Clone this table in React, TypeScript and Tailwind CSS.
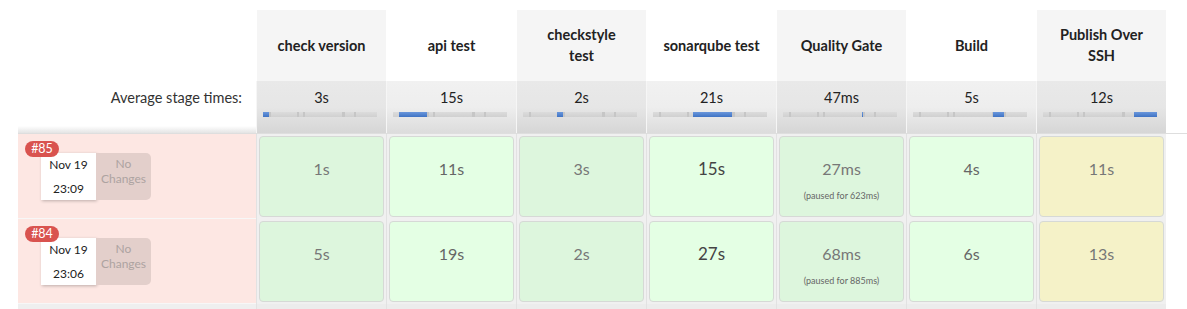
import React from "react";

type Stage = {
  name: React.ReactNode;
  avg: string;
  blue: [number, number];
  times: string[];
  paused?: string[];
  kind: "green" | "yellow";
  big?: boolean;
};

const stages: Stage[] = [
  { name: "check version", avg: "3s", blue: [0, 6], times: ["1s", "5s"], kind: "green" },
  { name: "api test", avg: "15s", blue: [6, 34], times: ["11s", "19s"], kind: "green" },
  { name: <>checkstyle<br />test</>, avg: "2s", blue: [34, 40], times: ["3s", "2s"], kind: "green" },
  { name: "sonarqube test", avg: "21s", blue: [40, 79], times: ["15s", "27s"], kind: "green", big: true },
  { name: "Quality Gate", avg: "47ms", blue: [79, 80], times: ["27ms", "68ms"], paused: ["623ms", "885ms"], kind: "green" },
  { name: "Build", avg: "5s", blue: [80, 91], times: ["4s", "6s"], kind: "green" },
  { name: <>Publish Over<br />SSH</>, avg: "12s", blue: [91, 114], times: ["11s", "13s"], kind: "yellow" },
];

const ticks = [6, 34, 40, 79, 80, 91];

const builds = [
  { num: "#85", date: "Nov 19", time: "23:09" },
  { num: "#84", date: "Nov 19", time: "23:06" },
];

function Bar({ blue }: { blue: [number, number] }) {
  const [a, b] = blue;
  return (
    <div className="relative ml-[6px] h-[5px] w-[114px] bg-gradient-to-b from-[#dcdcdc] to-[#d0d0d0]">
      {ticks.map((t) => (
        <div key={t} className="absolute top-0 h-full w-[2px] bg-[#c6c6c6]" style={{ left: t }} />
      ))}
      <div
        className="absolute top-0 h-full bg-gradient-to-b from-[#6a97dc] to-[#3f73c4]"
        style={{ left: a, width: Math.max(1, b - a) }}
      />
    </div>
  );
}

export default function App() {
  const font = { fontFamily: "Lato, 'Open Sans', sans-serif" };
  return (
    <div className="w-[1187px] h-[309px] overflow-hidden bg-white text-[#333]" style={font}>
      <div className="pt-[10px]">
        {/* Header row */}
        <div className="flex">
          <div className="w-[256px] shrink-0" />
          {stages.map((s, i) => (
            <div
              key={i}
              className={`flex h-[71px] w-[130px] shrink-0 items-center justify-center whitespace-nowrap text-center text-[14.5px] font-bold leading-[21px] text-[#222] border-l border-white ${
                i % 2 === 0 ? "bg-[#f5f5f5]" : "bg-white"
              }`}
            >
              <div className="-mt-[1px]">{s.name}</div>
            </div>
          ))}
        </div>

        {/* Average row */}
        <div className="flex">
          <div className="flex h-[52px] w-[256px] shrink-0 flex-col">
            <div className="pr-[14px] pt-[7px] text-right text-[14.5px] leading-[20px] text-[#333]">
              Average stage times:
            </div>
            <div className="flex-1" />
            <div className="ml-[18px] h-[7px] bg-gradient-to-b from-white to-[#e4e4e4]" />
          </div>
          {stages.map((s, i) => (
            <div
              key={i}
              className={`h-[52px] w-[130px] shrink-0 border-l border-[#f6f6f6] bg-gradient-to-b ${
                i % 2 === 0 ? "from-[#e9e9e9] via-[#e6e6e6] to-[#d6d6d6]" : "from-[#f1f1f1] via-[#eeeeee] to-[#dcdcdc]"
              }`}
            >
              <div className="pt-[7px] text-center text-[14.5px] leading-[20px] text-[#222]">{s.avg}</div>
              <div className="mt-[4px]">
                <Bar blue={s.blue} />
              </div>
            </div>
          ))}
        </div>

        {/* Build rows */}
        <div className="h-[1px] bg-[#dedede] ml-[18px]" />
        {builds.map((b, r) => (
          <div key={r} className="flex">
            <div className="w-[256px] shrink-0 pl-[18px]">
              <div className="relative h-[85px] border-b border-[#f7f7f7] bg-[#fde7e3]">
                <div className="absolute left-[7px] top-[7px] z-10 flex h-[16px] w-[34px] items-center justify-center rounded-full bg-[#d9534f] text-[12.5px] leading-none text-white">
                  {b.num}
                </div>
                <div className="flex pl-[23px] pt-[19px]">
                  <div className="flex h-[47px] w-[55px] flex-col items-center bg-white text-[12px] leading-[24px] text-[#222] shadow-[1px_1px_3px_rgba(0,0,0,0.25)]">
                    <span>{b.date}</span>
                    <span>{b.time}</span>
                  </div>
                  <div className="flex h-[47px] w-[55px] flex-col items-center rounded-r-[5px] bg-[#e3cfcb] pt-[3px] text-[12px] leading-[15px] text-[#ada3a1]">
                    <span>No</span>
                    <span>Changes</span>
                  </div>
                </div>
              </div>
            </div>
            {stages.map((s, i) => {
              const odd = i % 2 === 0;
              const bg =
                s.kind === "yellow"
                  ? "bg-[#f5f2c8]"
                  : odd
                  ? "bg-[#ddf6dd]"
                  : "bg-[#e4ffe4]";
              return (
                <div
                  key={i}
                  className="h-[85px] w-[130px] shrink-0 border-l border-[#e2e2e2] bg-[#f0f0f0] px-[2px] pt-[2px] pb-[2px]"
                >
                  <div
                    className={`h-[81px] rounded-[4px] border border-[#d6d9d6] ${bg} pt-[22px] text-center`}
                  >
                    <div
                      className={`leading-[20px] ${
                        s.big ? "text-[17px] text-[#444]" : odd ? "text-[16px] text-[#777]" : "text-[16px] text-[#666]"
                      }`}
                    >
                      {s.times[r]}
                    </div>
                    {s.paused && (
                      <div className="mt-[11px] text-[9px] leading-[12px] text-[#666]">
                        (paused for {s.paused[r]})
                      </div>
                    )}
                  </div>
                </div>
              );
            })}
          </div>
        ))}
        <div className="flex">
          <div className="w-[256px] shrink-0 pl-[18px]">
            <div className="h-[10px] bg-[#efefef]" />
          </div>
          {stages.map((s, i) => (
            <div key={i} className="h-[10px] w-[130px] shrink-0 border-l border-[#e2e2e2] bg-[#ececec]" />
          ))}
        </div>
      </div>
    </div>
  );
}
